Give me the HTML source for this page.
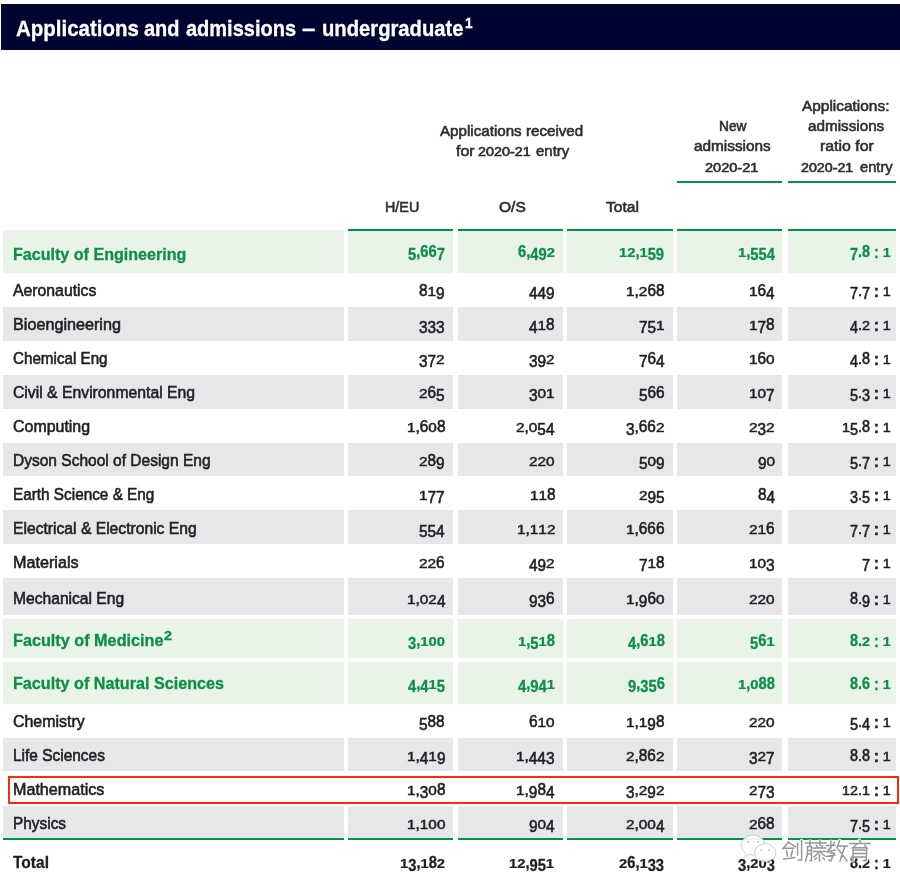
<!DOCTYPE html>
<html><head><meta charset="utf-8"><style>
html,body{margin:0;padding:0;background:#fff;width:900px;height:891px;overflow:hidden;position:relative}
.r{position:absolute}
.s{display:inline-block;transform:scaleY(0.75);transform-origin:50% 13px}
.d{display:inline-block;transform:translateY(3px)}
.c{display:inline-block;font-weight:bold;transform:translateY(0.5px)}
.t{position:absolute;white-space:nowrap;line-height:1;font-family:"Liberation Sans",sans-serif;transform-origin:0 0;-webkit-text-stroke:0.45px currentColor}
</style></head><body>
<div class="r" style="left:1px;top:4.3px;width:899.00px;height:45.70px;background:#000532"></div>
<div class="t" style="left:16.00px;top:18px;font-size:22px;font-weight:bold;color:#ffffff;transform:scaleX(0.9311);-webkit-text-stroke:0.3px #ffffff;">Applications</div>
<div class="t" style="left:143.80px;top:18px;font-size:22px;font-weight:bold;color:#ffffff;transform:scaleX(0.9073);-webkit-text-stroke:0.3px #ffffff;">and</div>
<div class="t" style="left:185.60px;top:18px;font-size:22px;font-weight:bold;color:#ffffff;transform:scaleX(0.9091);-webkit-text-stroke:0.3px #ffffff;">admissions</div>
<div class="t" style="left:302.20px;top:18px;font-size:22px;font-weight:bold;color:#ffffff;transform:scaleX(1.0939);-webkit-text-stroke:0.3px #ffffff;">–</div>
<div class="t" style="left:322.20px;top:18px;font-size:22px;font-weight:bold;color:#ffffff;transform:scaleX(0.9188);-webkit-text-stroke:0.3px #ffffff;">undergraduate</div>
<div class="t" style="left:465.00px;top:16px;font-size:14px;font-weight:bold;color:#ffffff;transform:scaleX(0.9677);-webkit-text-stroke:0.3px #ffffff;">1</div>
<div class="t" style="left:440.40px;top:123px;font-size:15.5px;font-weight:normal;color:#2e2d32;transform:scaleX(0.9775);-webkit-text-stroke:0.6px #2e2d32;">Applications received</div>
<div class="t" style="left:455.60px;top:143px;font-size:15.5px;font-weight:normal;color:#2e2d32;transform:scaleX(1.0317);-webkit-text-stroke:0.6px #2e2d32;">for</div>
<div class="t" style="left:477.80px;top:146px;font-size:12.5px;font-weight:normal;color:#2e2d32;transform:scaleX(1.1510);-webkit-text-stroke:0.6px #2e2d32;">2020-21</div>
<div class="t" style="left:536.10px;top:143px;font-size:15.5px;font-weight:normal;color:#2e2d32;transform:scaleX(0.9652);-webkit-text-stroke:0.6px #2e2d32;">entry</div>
<div class="t" style="left:718.60px;top:118px;font-size:15.5px;font-weight:normal;color:#2e2d32;transform:scaleX(0.8867);-webkit-text-stroke:0.6px #2e2d32;">New</div>
<div class="t" style="left:693.50px;top:138px;font-size:15.5px;font-weight:normal;color:#2e2d32;transform:scaleX(0.9897);-webkit-text-stroke:0.6px #2e2d32;">admissions</div>
<div class="t" style="left:705.30px;top:162px;font-size:12.5px;font-weight:normal;color:#2e2d32;transform:scaleX(1.1640);-webkit-text-stroke:0.6px #2e2d32;">2020-21</div>
<div class="t" style="left:802.40px;top:98px;font-size:15.5px;font-weight:normal;color:#2e2d32;transform:scaleX(0.9946);-webkit-text-stroke:0.6px #2e2d32;">Applications:</div>
<div class="t" style="left:808.00px;top:118px;font-size:15.5px;font-weight:normal;color:#2e2d32;transform:scaleX(0.9832);-webkit-text-stroke:0.6px #2e2d32;">admissions</div>
<div class="t" style="left:819.50px;top:138px;font-size:15.5px;font-weight:normal;color:#2e2d32;transform:scaleX(1.0229);-webkit-text-stroke:0.6px #2e2d32;">ratio for</div>
<div class="t" style="left:800.80px;top:162px;font-size:12.5px;font-weight:normal;color:#2e2d32;transform:scaleX(1.1379);-webkit-text-stroke:0.6px #2e2d32;">2020-21</div>
<div class="t" style="left:859.70px;top:159px;font-size:15.5px;font-weight:normal;color:#2e2d32;transform:scaleX(0.9478);-webkit-text-stroke:0.6px #2e2d32;">entry</div>
<div class="t" style="left:384.80px;top:199px;font-size:15.5px;font-weight:normal;color:#2e2d32;transform:scaleX(0.9243);-webkit-text-stroke:0.6px #2e2d32;">H/EU</div>
<div class="t" style="left:498.50px;top:199px;font-size:15.5px;font-weight:normal;color:#2e2d32;transform:scaleX(1.0019);-webkit-text-stroke:0.6px #2e2d32;">O/S</div>
<div class="t" style="left:605.60px;top:199px;font-size:15.5px;font-weight:normal;color:#2e2d32;transform:scaleX(1.0076);-webkit-text-stroke:0.6px #2e2d32;">Total</div>
<div class="r" style="left:677.3px;top:181px;width:105.00px;height:2.00px;background:#009245"></div>
<div class="r" style="left:787.6px;top:181px;width:108.90px;height:2.00px;background:#009245"></div>
<div class="r" style="left:3px;top:230px;width:340.80px;height:42.80px;background:#e9f3e8"></div>
<div class="r" style="left:347.5px;top:230px;width:105.80px;height:42.80px;background:#e9f3e8"></div>
<div class="r" style="left:457.5px;top:230px;width:105.90px;height:42.80px;background:#e9f3e8"></div>
<div class="r" style="left:567px;top:230px;width:106.20px;height:42.80px;background:#e9f3e8"></div>
<div class="r" style="left:677.3px;top:230px;width:105.00px;height:42.80px;background:#e9f3e8"></div>
<div class="r" style="left:787.6px;top:230px;width:108.90px;height:42.80px;background:#e9f3e8"></div>
<div class="t" style="left:12.80px;top:246px;font-size:17px;font-weight:bold;color:#0b8f45;transform:scaleX(0.9462);-webkit-text-stroke:0.3px #0b8f45;">Faculty of Engineering</div>
<div class="t" style="left:408.20px;top:244px;font-size:16px;font-weight:bold;color:#0b8f45;transform:scaleX(0.9200);-webkit-text-stroke:0.3px #0b8f45;"><span class="d">5</span>,66<span class="d">7</span></div>
<div class="t" style="left:517.70px;top:244px;font-size:16px;font-weight:bold;color:#0b8f45;transform:scaleX(0.9200);-webkit-text-stroke:0.3px #0b8f45;">6,<span class="d">4</span><span class="d">9</span><span class="s">2</span></div>
<div class="t" style="left:619.42px;top:244px;font-size:16px;font-weight:bold;color:#0b8f45;transform:scaleX(0.9200);-webkit-text-stroke:0.3px #0b8f45;"><span class="s">1</span><span class="s">2</span>,<span class="s">1</span><span class="d">5</span><span class="d">9</span></div>
<div class="t" style="left:738.00px;top:244px;font-size:16px;font-weight:bold;color:#0b8f45;transform:scaleX(0.9200);-webkit-text-stroke:0.3px #0b8f45;"><span class="s">1</span>,<span class="d">5</span><span class="d">5</span><span class="d">4</span></div>
<div class="t" style="left:849.56px;top:244px;font-size:16px;font-weight:bold;color:#0b8f45;transform:scaleX(0.9000);-webkit-text-stroke:0.3px #0b8f45;"><span class="d">7</span>.8 <span class="c">:</span> <span class="s">1</span></div>
<div class="t" style="left:12.80px;top:283px;font-size:16.7px;font-weight:normal;color:#1f1e24;transform:scaleX(0.9459);-webkit-text-stroke:0.6px #1f1e24;">Aeronautics</div>
<div class="t" style="left:419.32px;top:283px;font-size:16px;font-weight:normal;color:#1f1e24;transform:scaleX(0.9600);-webkit-text-stroke:0.6px #1f1e24;">8<span class="s">1</span><span class="d">9</span></div>
<div class="t" style="left:528.82px;top:283px;font-size:16px;font-weight:normal;color:#1f1e24;transform:scaleX(0.9600);-webkit-text-stroke:0.6px #1f1e24;"><span class="d">4</span><span class="d">4</span><span class="d">9</span></div>
<div class="t" style="left:626.10px;top:283px;font-size:16px;font-weight:normal;color:#1f1e24;transform:scaleX(0.9600);-webkit-text-stroke:0.6px #1f1e24;"><span class="s">1</span>,<span class="s">2</span>68</div>
<div class="t" style="left:749.12px;top:283px;font-size:16px;font-weight:normal;color:#1f1e24;transform:scaleX(0.9600);-webkit-text-stroke:0.6px #1f1e24;"><span class="s">1</span>6<span class="d">4</span></div>
<div class="t" style="left:850.35px;top:283px;font-size:16px;font-weight:normal;color:#1f1e24;transform:scaleX(0.9000);-webkit-text-stroke:0.6px #1f1e24;"><span class="d">7</span>.<span class="d">7</span> <span class="c">:</span> <span class="s">1</span></div>
<div class="r" style="left:3px;top:307px;width:340.80px;height:33.80px;background:#e6e7e9"></div>
<div class="r" style="left:347.5px;top:307px;width:105.80px;height:33.80px;background:#e6e7e9"></div>
<div class="r" style="left:457.5px;top:307px;width:105.90px;height:33.80px;background:#e6e7e9"></div>
<div class="r" style="left:567px;top:307px;width:106.20px;height:33.80px;background:#e6e7e9"></div>
<div class="r" style="left:677.3px;top:307px;width:105.00px;height:33.80px;background:#e6e7e9"></div>
<div class="r" style="left:787.6px;top:307px;width:108.90px;height:33.80px;background:#e6e7e9"></div>
<div class="t" style="left:12.80px;top:317px;font-size:16.7px;font-weight:normal;color:#1f1e24;transform:scaleX(0.9696);-webkit-text-stroke:0.6px #1f1e24;">Bioengineering</div>
<div class="t" style="left:419.32px;top:317px;font-size:16px;font-weight:normal;color:#1f1e24;transform:scaleX(0.9600);-webkit-text-stroke:0.6px #1f1e24;"><span class="d">3</span><span class="d">3</span><span class="d">3</span></div>
<div class="t" style="left:528.82px;top:317px;font-size:16px;font-weight:normal;color:#1f1e24;transform:scaleX(0.9600);-webkit-text-stroke:0.6px #1f1e24;"><span class="d">4</span><span class="s">1</span>8</div>
<div class="t" style="left:638.82px;top:317px;font-size:16px;font-weight:normal;color:#1f1e24;transform:scaleX(0.9600);-webkit-text-stroke:0.6px #1f1e24;"><span class="d">7</span><span class="d">5</span><span class="s">1</span></div>
<div class="t" style="left:749.12px;top:317px;font-size:16px;font-weight:normal;color:#1f1e24;transform:scaleX(0.9600);-webkit-text-stroke:0.6px #1f1e24;"><span class="s">1</span><span class="d">7</span>8</div>
<div class="t" style="left:850.35px;top:317px;font-size:16px;font-weight:normal;color:#1f1e24;transform:scaleX(0.9000);-webkit-text-stroke:0.6px #1f1e24;"><span class="d">4</span>.<span class="s">2</span> <span class="c">:</span> <span class="s">1</span></div>
<div class="t" style="left:12.80px;top:351px;font-size:16.7px;font-weight:normal;color:#1f1e24;transform:scaleX(0.9101);-webkit-text-stroke:0.6px #1f1e24;">Chemical Eng</div>
<div class="t" style="left:419.32px;top:351px;font-size:16px;font-weight:normal;color:#1f1e24;transform:scaleX(0.9600);-webkit-text-stroke:0.6px #1f1e24;"><span class="d">3</span><span class="d">7</span><span class="s">2</span></div>
<div class="t" style="left:528.82px;top:351px;font-size:16px;font-weight:normal;color:#1f1e24;transform:scaleX(0.9600);-webkit-text-stroke:0.6px #1f1e24;"><span class="d">3</span><span class="d">9</span><span class="s">2</span></div>
<div class="t" style="left:638.82px;top:351px;font-size:16px;font-weight:normal;color:#1f1e24;transform:scaleX(0.9600);-webkit-text-stroke:0.6px #1f1e24;"><span class="d">7</span>6<span class="d">4</span></div>
<div class="t" style="left:749.12px;top:351px;font-size:16px;font-weight:normal;color:#1f1e24;transform:scaleX(0.9600);-webkit-text-stroke:0.6px #1f1e24;"><span class="s">1</span>6<span class="s">0</span></div>
<div class="t" style="left:850.35px;top:351px;font-size:16px;font-weight:normal;color:#1f1e24;transform:scaleX(0.9000);-webkit-text-stroke:0.6px #1f1e24;"><span class="d">4</span>.8 <span class="c">:</span> <span class="s">1</span></div>
<div class="r" style="left:3px;top:375.2px;width:340.80px;height:33.60px;background:#e6e7e9"></div>
<div class="r" style="left:347.5px;top:375.2px;width:105.80px;height:33.60px;background:#e6e7e9"></div>
<div class="r" style="left:457.5px;top:375.2px;width:105.90px;height:33.60px;background:#e6e7e9"></div>
<div class="r" style="left:567px;top:375.2px;width:106.20px;height:33.60px;background:#e6e7e9"></div>
<div class="r" style="left:677.3px;top:375.2px;width:105.00px;height:33.60px;background:#e6e7e9"></div>
<div class="r" style="left:787.6px;top:375.2px;width:108.90px;height:33.60px;background:#e6e7e9"></div>
<div class="t" style="left:12.80px;top:385px;font-size:16.7px;font-weight:normal;color:#1f1e24;transform:scaleX(0.9436);-webkit-text-stroke:0.6px #1f1e24;">Civil & Environmental Eng</div>
<div class="t" style="left:419.32px;top:385px;font-size:16px;font-weight:normal;color:#1f1e24;transform:scaleX(0.9600);-webkit-text-stroke:0.6px #1f1e24;"><span class="s">2</span>6<span class="d">5</span></div>
<div class="t" style="left:528.82px;top:385px;font-size:16px;font-weight:normal;color:#1f1e24;transform:scaleX(0.9600);-webkit-text-stroke:0.6px #1f1e24;"><span class="d">3</span><span class="s">0</span><span class="s">1</span></div>
<div class="t" style="left:638.82px;top:385px;font-size:16px;font-weight:normal;color:#1f1e24;transform:scaleX(0.9600);-webkit-text-stroke:0.6px #1f1e24;"><span class="d">5</span>66</div>
<div class="t" style="left:749.12px;top:385px;font-size:16px;font-weight:normal;color:#1f1e24;transform:scaleX(0.9600);-webkit-text-stroke:0.6px #1f1e24;"><span class="s">1</span><span class="s">0</span><span class="d">7</span></div>
<div class="t" style="left:850.35px;top:385px;font-size:16px;font-weight:normal;color:#1f1e24;transform:scaleX(0.9000);-webkit-text-stroke:0.6px #1f1e24;"><span class="d">5</span>.<span class="d">3</span> <span class="c">:</span> <span class="s">1</span></div>
<div class="t" style="left:12.80px;top:419px;font-size:16.7px;font-weight:normal;color:#1f1e24;transform:scaleX(0.9555);-webkit-text-stroke:0.6px #1f1e24;">Computing</div>
<div class="t" style="left:406.60px;top:419px;font-size:16px;font-weight:normal;color:#1f1e24;transform:scaleX(0.9600);-webkit-text-stroke:0.6px #1f1e24;"><span class="s">1</span>,6<span class="s">0</span>8</div>
<div class="t" style="left:516.10px;top:419px;font-size:16px;font-weight:normal;color:#1f1e24;transform:scaleX(0.9600);-webkit-text-stroke:0.6px #1f1e24;"><span class="s">2</span>,<span class="s">0</span><span class="d">5</span><span class="d">4</span></div>
<div class="t" style="left:626.10px;top:419px;font-size:16px;font-weight:normal;color:#1f1e24;transform:scaleX(0.9600);-webkit-text-stroke:0.6px #1f1e24;"><span class="d">3</span>,66<span class="s">2</span></div>
<div class="t" style="left:749.12px;top:419px;font-size:16px;font-weight:normal;color:#1f1e24;transform:scaleX(0.9600);-webkit-text-stroke:0.6px #1f1e24;"><span class="s">2</span><span class="d">3</span><span class="s">2</span></div>
<div class="t" style="left:842.36px;top:419px;font-size:16px;font-weight:normal;color:#1f1e24;transform:scaleX(0.9000);-webkit-text-stroke:0.6px #1f1e24;"><span class="s">1</span><span class="d">5</span>.8 <span class="c">:</span> <span class="s">1</span></div>
<div class="r" style="left:3px;top:442.6px;width:340.80px;height:33.60px;background:#e6e7e9"></div>
<div class="r" style="left:347.5px;top:442.6px;width:105.80px;height:33.60px;background:#e6e7e9"></div>
<div class="r" style="left:457.5px;top:442.6px;width:105.90px;height:33.60px;background:#e6e7e9"></div>
<div class="r" style="left:567px;top:442.6px;width:106.20px;height:33.60px;background:#e6e7e9"></div>
<div class="r" style="left:677.3px;top:442.6px;width:105.00px;height:33.60px;background:#e6e7e9"></div>
<div class="r" style="left:787.6px;top:442.6px;width:108.90px;height:33.60px;background:#e6e7e9"></div>
<div class="t" style="left:12.80px;top:453px;font-size:16.7px;font-weight:normal;color:#1f1e24;transform:scaleX(0.9299);-webkit-text-stroke:0.6px #1f1e24;">Dyson School of Design Eng</div>
<div class="t" style="left:419.32px;top:453px;font-size:16px;font-weight:normal;color:#1f1e24;transform:scaleX(0.9600);-webkit-text-stroke:0.6px #1f1e24;"><span class="s">2</span>8<span class="d">9</span></div>
<div class="t" style="left:528.82px;top:453px;font-size:16px;font-weight:normal;color:#1f1e24;transform:scaleX(0.9600);-webkit-text-stroke:0.6px #1f1e24;"><span class="s">2</span><span class="s">2</span><span class="s">0</span></div>
<div class="t" style="left:638.82px;top:453px;font-size:16px;font-weight:normal;color:#1f1e24;transform:scaleX(0.9600);-webkit-text-stroke:0.6px #1f1e24;"><span class="d">5</span><span class="s">0</span><span class="d">9</span></div>
<div class="t" style="left:757.76px;top:453px;font-size:16px;font-weight:normal;color:#1f1e24;transform:scaleX(0.9600);-webkit-text-stroke:0.6px #1f1e24;"><span class="d">9</span><span class="s">0</span></div>
<div class="t" style="left:850.35px;top:453px;font-size:16px;font-weight:normal;color:#1f1e24;transform:scaleX(0.9000);-webkit-text-stroke:0.6px #1f1e24;"><span class="d">5</span>.<span class="d">7</span> <span class="c">:</span> <span class="s">1</span></div>
<div class="t" style="left:12.80px;top:487px;font-size:16.7px;font-weight:normal;color:#1f1e24;transform:scaleX(0.9180);-webkit-text-stroke:0.6px #1f1e24;">Earth Science & Eng</div>
<div class="t" style="left:419.32px;top:487px;font-size:16px;font-weight:normal;color:#1f1e24;transform:scaleX(0.9600);-webkit-text-stroke:0.6px #1f1e24;"><span class="s">1</span><span class="d">7</span><span class="d">7</span></div>
<div class="t" style="left:530.02px;top:487px;font-size:16px;font-weight:normal;color:#1f1e24;transform:scaleX(0.9600);-webkit-text-stroke:0.6px #1f1e24;"><span class="s">1</span><span class="s">1</span>8</div>
<div class="t" style="left:638.82px;top:487px;font-size:16px;font-weight:normal;color:#1f1e24;transform:scaleX(0.9600);-webkit-text-stroke:0.6px #1f1e24;"><span class="s">2</span><span class="d">9</span><span class="d">5</span></div>
<div class="t" style="left:757.76px;top:487px;font-size:16px;font-weight:normal;color:#1f1e24;transform:scaleX(0.9600);-webkit-text-stroke:0.6px #1f1e24;">8<span class="d">4</span></div>
<div class="t" style="left:850.35px;top:487px;font-size:16px;font-weight:normal;color:#1f1e24;transform:scaleX(0.9000);-webkit-text-stroke:0.6px #1f1e24;"><span class="d">3</span>.<span class="d">5</span> <span class="c">:</span> <span class="s">1</span></div>
<div class="r" style="left:3px;top:510.2px;width:340.80px;height:34.20px;background:#e6e7e9"></div>
<div class="r" style="left:347.5px;top:510.2px;width:105.80px;height:34.20px;background:#e6e7e9"></div>
<div class="r" style="left:457.5px;top:510.2px;width:105.90px;height:34.20px;background:#e6e7e9"></div>
<div class="r" style="left:567px;top:510.2px;width:106.20px;height:34.20px;background:#e6e7e9"></div>
<div class="r" style="left:677.3px;top:510.2px;width:105.00px;height:34.20px;background:#e6e7e9"></div>
<div class="r" style="left:787.6px;top:510.2px;width:108.90px;height:34.20px;background:#e6e7e9"></div>
<div class="t" style="left:12.80px;top:521px;font-size:16.7px;font-weight:normal;color:#1f1e24;transform:scaleX(0.9385);-webkit-text-stroke:0.6px #1f1e24;">Electrical & Electronic Eng</div>
<div class="t" style="left:419.32px;top:521px;font-size:16px;font-weight:normal;color:#1f1e24;transform:scaleX(0.9600);-webkit-text-stroke:0.6px #1f1e24;"><span class="d">5</span><span class="d">5</span><span class="d">4</span></div>
<div class="t" style="left:517.18px;top:521px;font-size:16px;font-weight:normal;color:#1f1e24;transform:scaleX(0.9600);-webkit-text-stroke:0.6px #1f1e24;"><span class="s">1</span>,<span class="s">1</span><span class="s">1</span><span class="s">2</span></div>
<div class="t" style="left:626.10px;top:521px;font-size:16px;font-weight:normal;color:#1f1e24;transform:scaleX(0.9600);-webkit-text-stroke:0.6px #1f1e24;"><span class="s">1</span>,666</div>
<div class="t" style="left:749.12px;top:521px;font-size:16px;font-weight:normal;color:#1f1e24;transform:scaleX(0.9600);-webkit-text-stroke:0.6px #1f1e24;"><span class="s">2</span><span class="s">1</span>6</div>
<div class="t" style="left:850.35px;top:521px;font-size:16px;font-weight:normal;color:#1f1e24;transform:scaleX(0.9000);-webkit-text-stroke:0.6px #1f1e24;"><span class="d">7</span>.<span class="d">7</span> <span class="c">:</span> <span class="s">1</span></div>
<div class="t" style="left:12.80px;top:555px;font-size:16.7px;font-weight:normal;color:#1f1e24;transform:scaleX(0.9689);-webkit-text-stroke:0.6px #1f1e24;">Materials</div>
<div class="t" style="left:419.32px;top:555px;font-size:16px;font-weight:normal;color:#1f1e24;transform:scaleX(0.9600);-webkit-text-stroke:0.6px #1f1e24;"><span class="s">2</span><span class="s">2</span>6</div>
<div class="t" style="left:528.82px;top:555px;font-size:16px;font-weight:normal;color:#1f1e24;transform:scaleX(0.9600);-webkit-text-stroke:0.6px #1f1e24;"><span class="d">4</span><span class="d">9</span><span class="s">2</span></div>
<div class="t" style="left:638.82px;top:555px;font-size:16px;font-weight:normal;color:#1f1e24;transform:scaleX(0.9600);-webkit-text-stroke:0.6px #1f1e24;"><span class="d">7</span><span class="s">1</span>8</div>
<div class="t" style="left:749.12px;top:555px;font-size:16px;font-weight:normal;color:#1f1e24;transform:scaleX(0.9600);-webkit-text-stroke:0.6px #1f1e24;"><span class="s">1</span><span class="s">0</span><span class="d">3</span></div>
<div class="t" style="left:862.39px;top:555px;font-size:16px;font-weight:normal;color:#1f1e24;transform:scaleX(0.9000);-webkit-text-stroke:0.6px #1f1e24;"><span class="d">7</span> <span class="c">:</span> <span class="s">1</span></div>
<div class="r" style="left:3px;top:578.2px;width:340.80px;height:36.70px;background:#e6e7e9"></div>
<div class="r" style="left:347.5px;top:578.2px;width:105.80px;height:36.70px;background:#e6e7e9"></div>
<div class="r" style="left:457.5px;top:578.2px;width:105.90px;height:36.70px;background:#e6e7e9"></div>
<div class="r" style="left:567px;top:578.2px;width:106.20px;height:36.70px;background:#e6e7e9"></div>
<div class="r" style="left:677.3px;top:578.2px;width:105.00px;height:36.70px;background:#e6e7e9"></div>
<div class="r" style="left:787.6px;top:578.2px;width:108.90px;height:36.70px;background:#e6e7e9"></div>
<div class="t" style="left:12.80px;top:591px;font-size:16.7px;font-weight:normal;color:#1f1e24;transform:scaleX(0.9362);-webkit-text-stroke:0.6px #1f1e24;">Mechanical Eng</div>
<div class="t" style="left:406.60px;top:591px;font-size:16px;font-weight:normal;color:#1f1e24;transform:scaleX(0.9600);-webkit-text-stroke:0.6px #1f1e24;"><span class="s">1</span>,<span class="s">0</span><span class="s">2</span><span class="d">4</span></div>
<div class="t" style="left:528.82px;top:591px;font-size:16px;font-weight:normal;color:#1f1e24;transform:scaleX(0.9600);-webkit-text-stroke:0.6px #1f1e24;"><span class="d">9</span><span class="d">3</span>6</div>
<div class="t" style="left:626.10px;top:591px;font-size:16px;font-weight:normal;color:#1f1e24;transform:scaleX(0.9600);-webkit-text-stroke:0.6px #1f1e24;"><span class="s">1</span>,<span class="d">9</span>6<span class="s">0</span></div>
<div class="t" style="left:749.12px;top:591px;font-size:16px;font-weight:normal;color:#1f1e24;transform:scaleX(0.9600);-webkit-text-stroke:0.6px #1f1e24;"><span class="s">2</span><span class="s">2</span><span class="s">0</span></div>
<div class="t" style="left:850.35px;top:591px;font-size:16px;font-weight:normal;color:#1f1e24;transform:scaleX(0.9000);-webkit-text-stroke:0.6px #1f1e24;">8.<span class="d">9</span> <span class="c">:</span> <span class="s">1</span></div>
<div class="r" style="left:3px;top:618.6px;width:340.80px;height:39.80px;background:#e9f3e8"></div>
<div class="r" style="left:347.5px;top:618.6px;width:105.80px;height:39.80px;background:#e9f3e8"></div>
<div class="r" style="left:457.5px;top:618.6px;width:105.90px;height:39.80px;background:#e9f3e8"></div>
<div class="r" style="left:567px;top:618.6px;width:106.20px;height:39.80px;background:#e9f3e8"></div>
<div class="r" style="left:677.3px;top:618.6px;width:105.00px;height:39.80px;background:#e9f3e8"></div>
<div class="r" style="left:787.6px;top:618.6px;width:108.90px;height:39.80px;background:#e9f3e8"></div>
<div class="t" style="left:12.80px;top:632px;font-size:17px;font-weight:bold;color:#0b8f45;transform:scaleX(0.9540);-webkit-text-stroke:0.3px #0b8f45;">Faculty of Medicine</div>
<div class="t" style="left:408.20px;top:633px;font-size:16px;font-weight:bold;color:#0b8f45;transform:scaleX(0.9200);-webkit-text-stroke:0.3px #0b8f45;"><span class="d">3</span>,<span class="s">1</span><span class="s">0</span><span class="s">0</span></div>
<div class="t" style="left:517.70px;top:633px;font-size:16px;font-weight:bold;color:#0b8f45;transform:scaleX(0.9200);-webkit-text-stroke:0.3px #0b8f45;"><span class="s">1</span>,<span class="d">5</span><span class="s">1</span>8</div>
<div class="t" style="left:627.70px;top:633px;font-size:16px;font-weight:bold;color:#0b8f45;transform:scaleX(0.9200);-webkit-text-stroke:0.3px #0b8f45;"><span class="d">4</span>,6<span class="s">1</span>8</div>
<div class="t" style="left:750.19px;top:633px;font-size:16px;font-weight:bold;color:#0b8f45;transform:scaleX(0.9200);-webkit-text-stroke:0.3px #0b8f45;"><span class="d">5</span>6<span class="s">1</span></div>
<div class="t" style="left:849.56px;top:633px;font-size:16px;font-weight:bold;color:#0b8f45;transform:scaleX(0.9000);-webkit-text-stroke:0.3px #0b8f45;">8.<span class="s">2</span> <span class="c">:</span> <span class="s">1</span></div>
<div class="r" style="left:3px;top:661.8px;width:340.80px;height:42.10px;background:#e9f3e8"></div>
<div class="r" style="left:347.5px;top:661.8px;width:105.80px;height:42.10px;background:#e9f3e8"></div>
<div class="r" style="left:457.5px;top:661.8px;width:105.90px;height:42.10px;background:#e9f3e8"></div>
<div class="r" style="left:567px;top:661.8px;width:106.20px;height:42.10px;background:#e9f3e8"></div>
<div class="r" style="left:677.3px;top:661.8px;width:105.00px;height:42.10px;background:#e9f3e8"></div>
<div class="r" style="left:787.6px;top:661.8px;width:108.90px;height:42.10px;background:#e9f3e8"></div>
<div class="t" style="left:12.80px;top:675px;font-size:17px;font-weight:bold;color:#0b8f45;transform:scaleX(0.9505);-webkit-text-stroke:0.3px #0b8f45;">Faculty of Natural Sciences</div>
<div class="t" style="left:408.20px;top:676px;font-size:16px;font-weight:bold;color:#0b8f45;transform:scaleX(0.9200);-webkit-text-stroke:0.3px #0b8f45;"><span class="d">4</span>,<span class="d">4</span><span class="s">1</span><span class="d">5</span></div>
<div class="t" style="left:517.70px;top:676px;font-size:16px;font-weight:bold;color:#0b8f45;transform:scaleX(0.9200);-webkit-text-stroke:0.3px #0b8f45;"><span class="d">4</span>,<span class="d">9</span><span class="d">4</span><span class="s">1</span></div>
<div class="t" style="left:627.70px;top:676px;font-size:16px;font-weight:bold;color:#0b8f45;transform:scaleX(0.9200);-webkit-text-stroke:0.3px #0b8f45;"><span class="d">9</span>,<span class="d">3</span><span class="d">5</span>6</div>
<div class="t" style="left:738.00px;top:676px;font-size:16px;font-weight:bold;color:#0b8f45;transform:scaleX(0.9200);-webkit-text-stroke:0.3px #0b8f45;"><span class="s">1</span>,<span class="s">0</span>88</div>
<div class="t" style="left:849.56px;top:676px;font-size:16px;font-weight:bold;color:#0b8f45;transform:scaleX(0.9000);-webkit-text-stroke:0.3px #0b8f45;">8.6 <span class="c">:</span> <span class="s">1</span></div>
<div class="t" style="left:12.80px;top:714px;font-size:16.7px;font-weight:normal;color:#1f1e24;transform:scaleX(0.9549);-webkit-text-stroke:0.6px #1f1e24;">Chemistry</div>
<div class="t" style="left:419.32px;top:714px;font-size:16px;font-weight:normal;color:#1f1e24;transform:scaleX(0.9600);-webkit-text-stroke:0.6px #1f1e24;"><span class="d">5</span>88</div>
<div class="t" style="left:528.82px;top:714px;font-size:16px;font-weight:normal;color:#1f1e24;transform:scaleX(0.9600);-webkit-text-stroke:0.6px #1f1e24;">6<span class="s">1</span><span class="s">0</span></div>
<div class="t" style="left:626.10px;top:714px;font-size:16px;font-weight:normal;color:#1f1e24;transform:scaleX(0.9600);-webkit-text-stroke:0.6px #1f1e24;"><span class="s">1</span>,<span class="s">1</span><span class="d">9</span>8</div>
<div class="t" style="left:749.12px;top:714px;font-size:16px;font-weight:normal;color:#1f1e24;transform:scaleX(0.9600);-webkit-text-stroke:0.6px #1f1e24;"><span class="s">2</span><span class="s">2</span><span class="s">0</span></div>
<div class="t" style="left:850.35px;top:714px;font-size:16px;font-weight:normal;color:#1f1e24;transform:scaleX(0.9000);-webkit-text-stroke:0.6px #1f1e24;"><span class="d">5</span>.<span class="d">4</span> <span class="c">:</span> <span class="s">1</span></div>
<div class="r" style="left:3px;top:738.1px;width:340.80px;height:33.40px;background:#e6e7e9"></div>
<div class="r" style="left:347.5px;top:738.1px;width:105.80px;height:33.40px;background:#e6e7e9"></div>
<div class="r" style="left:457.5px;top:738.1px;width:105.90px;height:33.40px;background:#e6e7e9"></div>
<div class="r" style="left:567px;top:738.1px;width:106.20px;height:33.40px;background:#e6e7e9"></div>
<div class="r" style="left:677.3px;top:738.1px;width:105.00px;height:33.40px;background:#e6e7e9"></div>
<div class="r" style="left:787.6px;top:738.1px;width:108.90px;height:33.40px;background:#e6e7e9"></div>
<div class="t" style="left:12.80px;top:748px;font-size:16.7px;font-weight:normal;color:#1f1e24;transform:scaleX(0.9254);-webkit-text-stroke:0.6px #1f1e24;">Life Sciences</div>
<div class="t" style="left:406.60px;top:748px;font-size:16px;font-weight:normal;color:#1f1e24;transform:scaleX(0.9600);-webkit-text-stroke:0.6px #1f1e24;"><span class="s">1</span>,<span class="d">4</span><span class="s">1</span><span class="d">9</span></div>
<div class="t" style="left:516.10px;top:748px;font-size:16px;font-weight:normal;color:#1f1e24;transform:scaleX(0.9600);-webkit-text-stroke:0.6px #1f1e24;"><span class="s">1</span>,<span class="d">4</span><span class="d">4</span><span class="d">3</span></div>
<div class="t" style="left:626.10px;top:748px;font-size:16px;font-weight:normal;color:#1f1e24;transform:scaleX(0.9600);-webkit-text-stroke:0.6px #1f1e24;"><span class="s">2</span>,86<span class="s">2</span></div>
<div class="t" style="left:749.12px;top:748px;font-size:16px;font-weight:normal;color:#1f1e24;transform:scaleX(0.9600);-webkit-text-stroke:0.6px #1f1e24;"><span class="d">3</span><span class="s">2</span><span class="d">7</span></div>
<div class="t" style="left:850.35px;top:748px;font-size:16px;font-weight:normal;color:#1f1e24;transform:scaleX(0.9000);-webkit-text-stroke:0.6px #1f1e24;">8.8 <span class="c">:</span> <span class="s">1</span></div>
<div class="t" style="left:12.80px;top:782px;font-size:16.7px;font-weight:normal;color:#1f1e24;transform:scaleX(0.9655);-webkit-text-stroke:0.6px #1f1e24;">Mathematics</div>
<div class="t" style="left:406.60px;top:782px;font-size:16px;font-weight:normal;color:#1f1e24;transform:scaleX(0.9600);-webkit-text-stroke:0.6px #1f1e24;"><span class="s">1</span>,<span class="d">3</span><span class="s">0</span>8</div>
<div class="t" style="left:516.10px;top:782px;font-size:16px;font-weight:normal;color:#1f1e24;transform:scaleX(0.9600);-webkit-text-stroke:0.6px #1f1e24;"><span class="s">1</span>,<span class="d">9</span>8<span class="d">4</span></div>
<div class="t" style="left:626.10px;top:782px;font-size:16px;font-weight:normal;color:#1f1e24;transform:scaleX(0.9600);-webkit-text-stroke:0.6px #1f1e24;"><span class="d">3</span>,<span class="s">2</span><span class="d">9</span><span class="s">2</span></div>
<div class="t" style="left:749.12px;top:782px;font-size:16px;font-weight:normal;color:#1f1e24;transform:scaleX(0.9600);-webkit-text-stroke:0.6px #1f1e24;"><span class="s">2</span><span class="d">7</span><span class="d">3</span></div>
<div class="t" style="left:842.36px;top:782px;font-size:16px;font-weight:normal;color:#1f1e24;transform:scaleX(0.9000);-webkit-text-stroke:0.6px #1f1e24;"><span class="s">1</span><span class="s">2</span>.<span class="s">1</span> <span class="c">:</span> <span class="s">1</span></div>
<div class="r" style="left:3px;top:805.9px;width:340.80px;height:32.40px;background:#e6e7e9"></div>
<div class="r" style="left:347.5px;top:805.9px;width:105.80px;height:32.40px;background:#e6e7e9"></div>
<div class="r" style="left:457.5px;top:805.9px;width:105.90px;height:32.40px;background:#e6e7e9"></div>
<div class="r" style="left:567px;top:805.9px;width:106.20px;height:32.40px;background:#e6e7e9"></div>
<div class="r" style="left:677.3px;top:805.9px;width:105.00px;height:32.40px;background:#e6e7e9"></div>
<div class="r" style="left:787.6px;top:805.9px;width:108.90px;height:32.40px;background:#e6e7e9"></div>
<div class="t" style="left:12.80px;top:816px;font-size:16.7px;font-weight:normal;color:#1f1e24;transform:scaleX(0.9223);-webkit-text-stroke:0.6px #1f1e24;">Physics</div>
<div class="t" style="left:406.60px;top:816px;font-size:16px;font-weight:normal;color:#1f1e24;transform:scaleX(0.9600);-webkit-text-stroke:0.6px #1f1e24;"><span class="s">1</span>,<span class="s">1</span><span class="s">0</span><span class="s">0</span></div>
<div class="t" style="left:528.82px;top:816px;font-size:16px;font-weight:normal;color:#1f1e24;transform:scaleX(0.9600);-webkit-text-stroke:0.6px #1f1e24;"><span class="d">9</span><span class="s">0</span><span class="d">4</span></div>
<div class="t" style="left:626.10px;top:816px;font-size:16px;font-weight:normal;color:#1f1e24;transform:scaleX(0.9600);-webkit-text-stroke:0.6px #1f1e24;"><span class="s">2</span>,<span class="s">0</span><span class="s">0</span><span class="d">4</span></div>
<div class="t" style="left:749.12px;top:816px;font-size:16px;font-weight:normal;color:#1f1e24;transform:scaleX(0.9600);-webkit-text-stroke:0.6px #1f1e24;"><span class="s">2</span>68</div>
<div class="t" style="left:850.35px;top:816px;font-size:16px;font-weight:normal;color:#1f1e24;transform:scaleX(0.9000);-webkit-text-stroke:0.6px #1f1e24;"><span class="d">7</span>.<span class="d">5</span> <span class="c">:</span> <span class="s">1</span></div>
<div class="r" style="left:347.5px;top:228.5px;width:105.80px;height:2.00px;background:#009245"></div>
<div class="r" style="left:457.5px;top:228.5px;width:105.90px;height:2.00px;background:#009245"></div>
<div class="r" style="left:567px;top:228.5px;width:106.20px;height:2.00px;background:#009245"></div>
<div class="r" style="left:677.3px;top:228.5px;width:105.00px;height:2.00px;background:#009245"></div>
<div class="r" style="left:787.6px;top:228.5px;width:108.90px;height:2.00px;background:#009245"></div>
<div class="t" style="left:163.80px;top:630px;font-size:12.5px;font-weight:bold;color:#0b8f45;transform:scaleX(1.1429);-webkit-text-stroke:0.3px #0b8f45;">2</div>
<div class="r" style="left:3px;top:838px;width:340.80px;height:2.20px;background:#009245"></div>
<div class="r" style="left:347.5px;top:838px;width:105.80px;height:2.20px;background:#009245"></div>
<div class="r" style="left:457.5px;top:838px;width:105.90px;height:2.20px;background:#009245"></div>
<div class="r" style="left:567px;top:838px;width:106.20px;height:2.20px;background:#009245"></div>
<div class="r" style="left:677.3px;top:838px;width:105.00px;height:2.20px;background:#009245"></div>
<div class="r" style="left:787.6px;top:838px;width:108.90px;height:2.20px;background:#009245"></div>
<div class="t" style="left:12.80px;top:854px;font-size:17px;font-weight:bold;color:#1f1e24;transform:scaleX(0.9143);-webkit-text-stroke:0.3px #1f1e24;">Total</div>
<div class="t" style="left:399.92px;top:855px;font-size:16px;font-weight:bold;color:#1f1e24;transform:scaleX(0.9200);-webkit-text-stroke:0.3px #1f1e24;"><span class="s">1</span><span class="d">3</span>,<span class="s">1</span>8<span class="s">2</span></div>
<div class="t" style="left:509.42px;top:855px;font-size:16px;font-weight:bold;color:#1f1e24;transform:scaleX(0.9200);-webkit-text-stroke:0.3px #1f1e24;"><span class="s">1</span><span class="s">2</span>,<span class="d">9</span><span class="d">5</span><span class="s">1</span></div>
<div class="t" style="left:619.42px;top:855px;font-size:16px;font-weight:bold;color:#1f1e24;transform:scaleX(0.9200);-webkit-text-stroke:0.3px #1f1e24;"><span class="s">2</span>6,<span class="s">1</span><span class="d">3</span><span class="d">3</span></div>
<div class="t" style="left:738.00px;top:855px;font-size:16px;font-weight:bold;color:#1f1e24;transform:scaleX(0.9200);-webkit-text-stroke:0.3px #1f1e24;"><span class="d">3</span>,<span class="s">2</span><span class="s">0</span><span class="d">3</span></div>
<div class="t" style="left:849.56px;top:855px;font-size:16px;font-weight:bold;color:#1f1e24;transform:scaleX(0.9000);-webkit-text-stroke:0.3px #1f1e24;">8.<span class="s">2</span> <span class="c">:</span> <span class="s">1</span></div>
<div class="r" style="left:8px;top:775.8px;width:890.5px;height:28.6px;box-sizing:border-box;border:2.3px solid #ff2a0c"></div>
<svg class="r" style="left:730px;top:826px" width="150" height="45" viewBox="730 826 150 45">
<defs><filter id="bl" x="-20%" y="-20%" width="140%" height="140%"><feGaussianBlur stdDeviation="0.35"/></filter></defs>
<g filter="url(#bl)">
<path d="M753 835.2 C 759.5 835.2 764.8 839.5 764.8 845.2 C 764.8 850.6 759.5 855 753 855 C 751.5 855 750.2 854.8 748.8 854.4 L 744.8 857.6 L 745.8 853.2 C 743 851.4 741.3 848.5 741.3 845.2 C 741.3 839.5 746.6 835.2 753 835.2 Z" fill="#ffffff" fill-opacity="0.9" stroke="#c4c4c4" stroke-width="0.8"/>
<circle cx="748.6" cy="841.8" r="0.9" fill="#aaa"/><circle cx="758.2" cy="841.8" r="0.9" fill="#aaa"/>
<path d="M765.2 843.8 C 771 843.8 775.8 847.8 775.8 852.7 C 775.8 857.6 771 861.6 765.2 861.6 C 759.4 861.6 754.6 857.6 754.6 852.7 C 754.6 847.8 759.4 843.8 765.2 843.8 Z" fill="#ffffff" fill-opacity="0.88" stroke="#c0c0c0" stroke-width="0.8"/>
<circle cx="761.2" cy="850" r="0.8" fill="#aaa"/><circle cx="769.2" cy="850" r="0.8" fill="#aaa"/>
</g>
<g fill="none" stroke-linecap="square" filter="url(#bl)">
<g stroke="#ffffff" stroke-width="3" stroke-opacity="0.9">
 <path id="c1" d="M788.5 842 L782.8 848.8 M788.5 842 L795.5 846.8 M785 848.3 L793.5 848.3 M786.5 851 L787.5 856 M792.5 850.5 L791 856 M783.8 859.2 L794.8 857.5 M797.6 843.5 L797.6 855 M801.6 840.5 L801.6 860 L798.5 860"/>
 <path id="c2" d="M805.3 843 L826 843 M810 841 L810 845.5 M820 841 L820 845.5 M807.5 846.5 L807.5 854 L805.5 861 M807.5 846.5 L811.5 846.5 L811.5 860.5 L810 860.5 M807.8 850.5 L811.2 850.5 M807.8 854 L811.2 854 M813.5 848 L825.5 848 M813.5 851.5 L825.5 851.5 M816.5 845.5 L817.5 848 M822.5 845.5 L821 848 M819.5 851.5 L814 857 M819.5 851.5 L825 856 M819.5 854.5 L819.5 861 M815 859.5 L816.5 858 M823 858 L824.5 859.5"/>
 <path id="c3" d="M826.5 845.5 L835 845.5 M830.8 841.2 L830.8 848.5 M834.5 842.5 L827 852 M827.2 852 L835 850 M830.5 853 L834 853 L831 861 L829 860 M826.5 856.5 L835 855 M839.5 840.5 L837 848 M837.5 846 L847.5 846 M845 846 L840 861 M838.5 849.5 L847 861"/>
 <path id="c4" d="M859.5 840 L860.5 842 M849.5 843.5 L870 843.5 M857 844 L852.5 848 L866.5 847.5 M865 845.5 L867 848.5 M853 850 L866.5 850 L866.5 860.5 L864 860.5 M853 850 L853 861 M853.2 853.5 L866.2 853.5 M853.2 857 L866.2 857"/>
</g>
<g stroke="#969696" stroke-width="1.5">
 <use href="#c1"/><use href="#c2"/><use href="#c3"/><use href="#c4"/>
</g>
</g>
</svg>
</body></html>
